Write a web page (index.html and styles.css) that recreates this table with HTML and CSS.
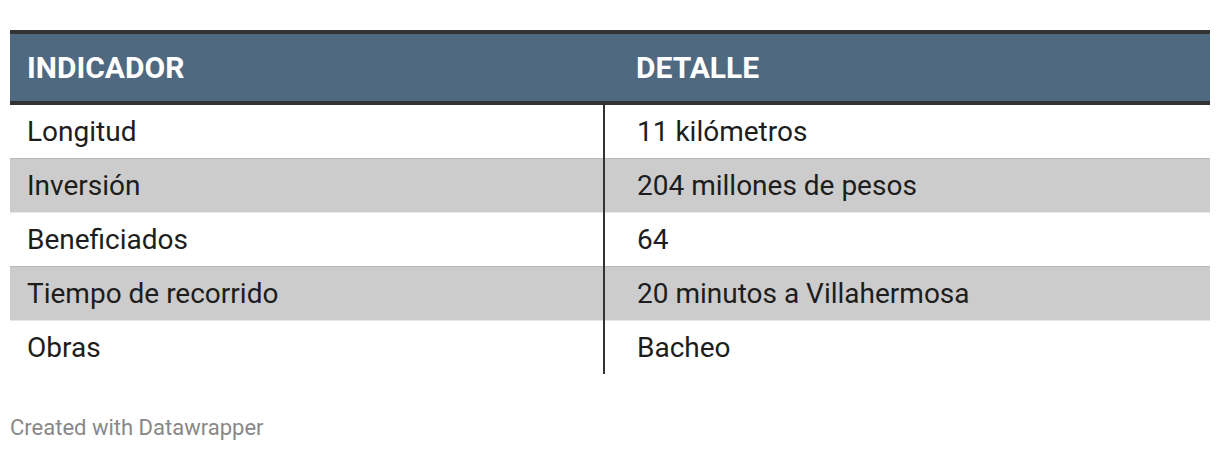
FILE: index.html
```html
<!DOCTYPE html>
<html lang="es">
<head>
<meta charset="utf-8">
<link rel="stylesheet" href="styles.css">
</head>
<body>
<div class="wrap">
  <table class="tbl">
    <thead>
      <tr><th class="c1">INDICADOR</th><th class="c2">DETALLE</th></tr>
    </thead>
    <tbody>
      <tr><td class="c1">Longitud</td><td class="c2">11 kilómetros</td></tr>
      <tr class="alt"><td class="c1">Inversión</td><td class="c2">204 millones de pesos</td></tr>
      <tr><td class="c1">Beneficiados</td><td class="c2">64</td></tr>
      <tr class="alt"><td class="c1">Tiempo de recorrido</td><td class="c2">20 minutos a Villahermosa</td></tr>
      <tr><td class="c1">Obras</td><td class="c2">Bacheo</td></tr>
    </tbody>
  </table>
  <div class="foot">Created with Datawrapper</div>
</div>
</body>
</html>
```
FILE: styles.css
```css
html, body { margin: 0; padding: 0; background: #fff; }
body { font-family: Roboto, "Liberation Sans", sans-serif; }
.wrap { padding: 30px 10px 0 10px; }
.tbl { width: 1200px; border-collapse: collapse; table-layout: fixed; }
.tbl th { background: #4f6980; color: #fff; font-weight: 700; font-size: 30px; text-align: left; height: 67px; padding: 0; border-top: 4px solid #333; border-bottom: 4px solid #333; }
.tbl th.c1 { width: 577px; padding-left: 17px; }
.tbl th.c2 { padding-left: 32px; }
.tbl td { font-size: 28px; color: #1d1d1d; height: 53px; padding: 0; border-top: 1px solid #e6e6e6; }
.tbl tbody tr:first-child td { border-top: none; }
.tbl td.c1 { padding-left: 17px; border-right: 2px solid #333; }
.tbl td.c2 { padding-left: 32px; }
.tbl tr.alt td { background: #cccccc; border-top-color: #b8b8b8; }
.foot { margin-top: 41px; font-size: 22px; color: #888; }
```
